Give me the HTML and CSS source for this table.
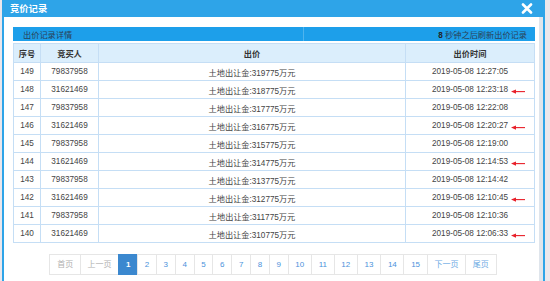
FILE: index.html
```html
<!DOCTYPE html>
<html lang="zh">
<head>
<meta charset="utf-8">
<title>竞价记录</title>
<link rel="stylesheet" href="styles.css">
</head>
<body>
<div class="window">
  <div class="titlebar">
    <span class="title">竞价记录</span>
    <svg class="close" width="12" height="11" viewBox="0 0 12 11"><path d="M2 1.5 L10 9.5 M10 1.5 L2 9.5" stroke="#fff" stroke-width="2.6" stroke-linecap="round"/></svg>
  </div>
  <div class="body">
    <div class="panel">
      <div class="subhead">
        <span class="sub-left">出价记录详情</span>
        <span class="sub-right"><b>8</b> 秒钟之后刷新出价记录</span>
      </div>
      <table class="records">
        <thead>
          <tr><th class="c1">序号</th><th class="c2">竞买人</th><th class="c3">出价</th><th class="c4">出价时间</th></tr>
        </thead>
        <tbody>
          <tr><td>149</td><td>79837958</td><td>土地出让金:319775万元</td><td>2019-05-08 12:27:05</td></tr>
          <tr><td>148</td><td>31621469</td><td>土地出让金:318775万元</td><td class="mark">2019-05-08 12:23:18<svg class="arrow" width="15" height="5" viewBox="0 0 15 5"><path d="M0 2.6 L5 0.4 L5 4.8 Z" fill="#e8202a"/><path d="M4 2.6 H14" stroke="#e8202a" stroke-width="1.1"/></svg></td></tr>
          <tr><td>147</td><td>79837958</td><td>土地出让金:317775万元</td><td>2019-05-08 12:22:08</td></tr>
          <tr><td>146</td><td>31621469</td><td>土地出让金:316775万元</td><td class="mark">2019-05-08 12:20:27<svg class="arrow" width="15" height="5" viewBox="0 0 15 5"><path d="M0 2.6 L5 0.4 L5 4.8 Z" fill="#e8202a"/><path d="M4 2.6 H14" stroke="#e8202a" stroke-width="1.1"/></svg></td></tr>
          <tr><td>145</td><td>79837958</td><td>土地出让金:315775万元</td><td>2019-05-08 12:19:00</td></tr>
          <tr><td>144</td><td>31621469</td><td>土地出让金:314775万元</td><td class="mark">2019-05-08 12:14:53<svg class="arrow" width="15" height="5" viewBox="0 0 15 5"><path d="M0 2.6 L5 0.4 L5 4.8 Z" fill="#e8202a"/><path d="M4 2.6 H14" stroke="#e8202a" stroke-width="1.1"/></svg></td></tr>
          <tr><td>143</td><td>79837958</td><td>土地出让金:313775万元</td><td>2019-05-08 12:14:42</td></tr>
          <tr><td>142</td><td>31621469</td><td>土地出让金:312775万元</td><td class="mark">2019-05-08 12:10:45<svg class="arrow" width="15" height="5" viewBox="0 0 15 5"><path d="M0 2.6 L5 0.4 L5 4.8 Z" fill="#e8202a"/><path d="M4 2.6 H14" stroke="#e8202a" stroke-width="1.1"/></svg></td></tr>
          <tr><td>141</td><td>79837958</td><td>土地出让金:311775万元</td><td>2019-05-08 12:10:36</td></tr>
          <tr><td>140</td><td>31621469</td><td>土地出让金:310775万元</td><td class="mark">2019-05-08 12:06:33<svg class="arrow" width="15" height="5" viewBox="0 0 15 5"><path d="M0 2.6 L5 0.4 L5 4.8 Z" fill="#e8202a"/><path d="M4 2.6 H14" stroke="#e8202a" stroke-width="1.1"/></svg></td></tr>
        </tbody>
      </table>
      <div class="pager">
        <span class="pg disabled">首页</span>
        <span class="pg disabled">上一页</span>
        <span class="pg active">1</span>
        <span class="pg">2</span>
        <span class="pg">3</span>
        <span class="pg">4</span>
        <span class="pg">5</span>
        <span class="pg">6</span>
        <span class="pg">7</span>
        <span class="pg">8</span>
        <span class="pg">9</span>
        <span class="pg">10</span>
        <span class="pg">11</span>
        <span class="pg">12</span>
        <span class="pg">13</span>
        <span class="pg">14</span>
        <span class="pg">15</span>
        <span class="pg nav">下一页</span>
        <span class="pg nav">尾页</span>
      </div>
    </div>
    <div class="strip"></div>
  </div>
</div>
</body>
</html>
```
FILE: styles.css
```css
html, body {
  margin: 0;
  padding: 0;
}
body {
  background: #ebe7ec;
  font-family: "Liberation Sans", "Noto Sans CJK SC", sans-serif;
  font-size: 8.2px;
  color: #444;
  height: 281px;
  overflow: hidden;
}
.window {
  margin-left: 2px;
  width: 539px;
  border-left: 2px solid #2ea4e8;
  border-right: 2px solid #2ea4e8;
  background: #fff;
  height: 281px;
}
.titlebar {
  height: 17px;
  background: #2ea4e8;
  display: flex;
  align-items: center;
  justify-content: space-between;
  padding: 0 12px 0 8px;
  margin-left: -2px;
  margin-right: -2px;
}
.title {
  color: #fff;
  font-weight: bold;
  font-size: 9.3px;
  font-family: "Noto Sans CJK SC", sans-serif;
  line-height: 17px;
}
.close {
  display: block;
  margin-top: -1px;
}
.body {
  display: flex;
  height: 264px;
}
.panel {
  width: 535px;
  background: #fff;
  padding: 10px 0 0 9px;
  box-sizing: border-box;
}
.strip {
  width: 4px;
  background: #dfe5ec;
}
.subhead {
  width: 522px;
  height: 14px;
  background: #1d9fea;
  display: flex;
  justify-content: space-between;
  align-items: center;
  color: #2b3f55;
  box-sizing: border-box;
  padding: 0 8px 0 10px;
  position: relative;
}
.subhead::after {
  content: "";
  position: absolute;
  left: 290px;
  top: 0;
  bottom: 0;
  width: 1px;
  background: #4fb4ee;
}
.sub-right b {
  font-weight: bold;
  color: #222;
}
.records {
  width: 522px;
  margin-top: 2px;
  border-collapse: collapse;
  table-layout: fixed;
}
.records th,
.records td {
  border: 1px solid #c5def5;
  text-align: center;
  padding: 0;
  white-space: nowrap;
}
.records th {
  background: #dbeefc;
  height: 18px;
  font-weight: bold;
  color: #333;
}
.records td {
  height: 17px;
  color: #444;
}
.c1 { width: 26px; }
.c2 { width: 57px; }
.c3 { width: 306px; }
.c4 { width: auto; }
.mark {
  position: relative;
}
.arrow {
  position: absolute;
  right: 8px;
  top: 8px;
}
.pager {
  display: flex;
  justify-content: center;
  margin-top: 11px;
  margin-left: -7px;
  width: 535px;
}
.pg {
  display: block;
  height: 19px;
  line-height: 19px;
  padding: 0 6.7px;
  border: 1px solid #e6e6e6;
  margin-left: -1px;
  color: #4b92db;
  background: #fff;
  font-size: 8px;
}
.pg.disabled {
  color: #b0b0b0;
}
.pg.nav {
  color: #6eaae3;
}
.pg.active {
  background: #3b88cf;
  border-color: #3b88cf;
  color: #fff;
  font-weight: bold;
}
```
